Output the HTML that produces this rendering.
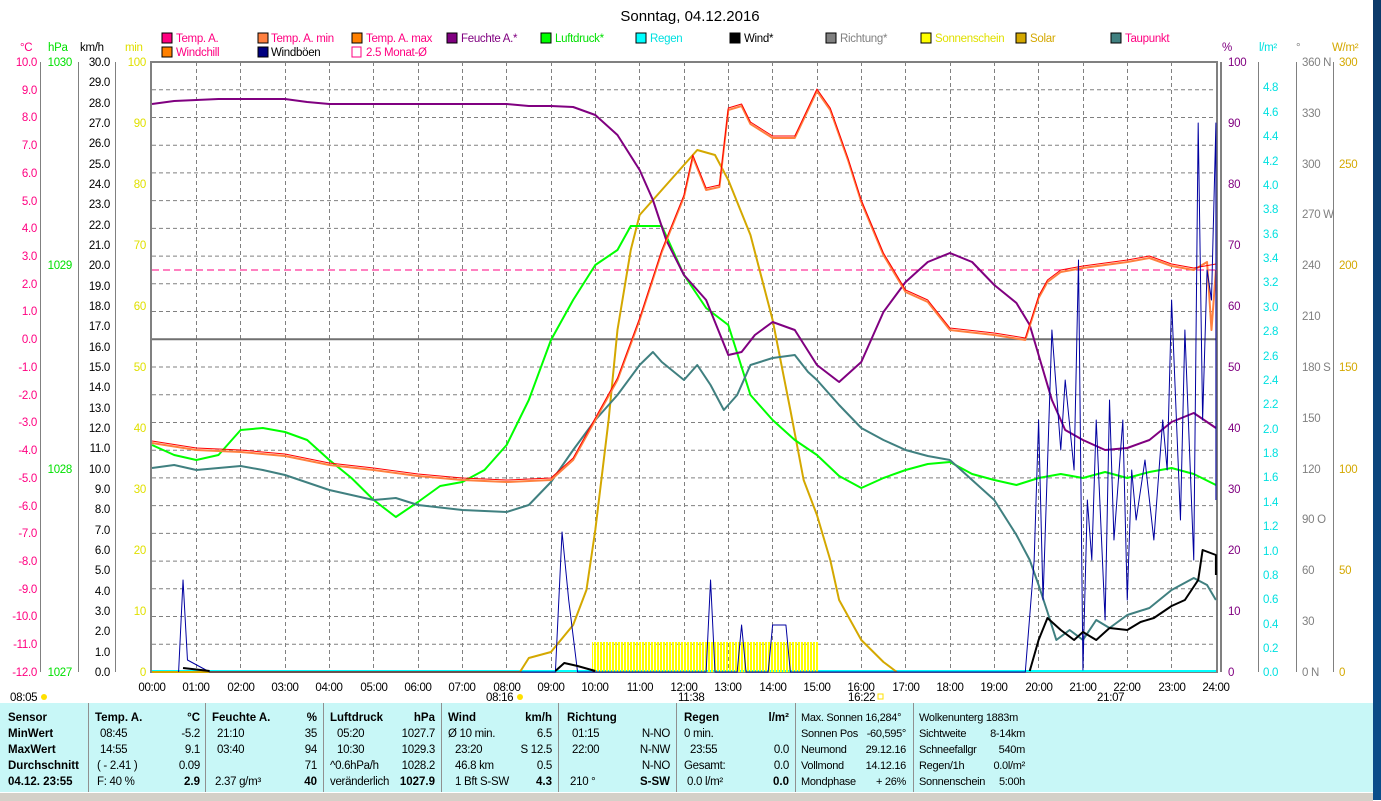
<!DOCTYPE html>
<html><head><meta charset="utf-8"><style>
body{margin:0;width:1381px;height:800px;overflow:hidden;background:#fff;font-family:"Liberation Sans",sans-serif;position:relative}
svg{position:absolute;left:0;top:0}
svg text{font-family:"Liberation Sans",sans-serif;font-size:11.5px;letter-spacing:-0.3px}
#tbl{position:absolute;left:0;top:703px;width:1373px;height:89px;background:#c8f7f7}
.c{position:absolute;top:0;height:89px;border-left:1px solid #909090}
.r{position:absolute;font-size:11.5px;letter-spacing:-0.3px;white-space:pre;line-height:14px}
.b{font-weight:bold;letter-spacing:0}
#strip{position:absolute;left:1373px;top:0;width:8px;height:800px;background:linear-gradient(#0c3a6a,#0a4d8a)}
#bot{position:absolute;left:0;top:792px;width:1373px;height:8px;background:#d4d0c8;border-top:1px solid #fff}
</style></head><body>
<svg width="1381" height="703" viewBox="0 0 1381 703">
<text x="690" y="21" text-anchor="middle" style="font-size:15px;letter-spacing:0">Sonntag, 04.12.2016</text>
<g stroke="#000" stroke-width="1">
<rect x="162" y="33" width="10" height="10" fill="#ff0080"/><rect x="258" y="33" width="10" height="10" fill="#ff8040"/><rect x="352" y="33" width="10" height="10" fill="#ff8000"/><rect x="447" y="33" width="10" height="10" fill="#800080"/><rect x="541" y="33" width="10" height="10" fill="#00ff00"/><rect x="636" y="33" width="10" height="10" fill="#00ffff"/><rect x="730" y="33" width="10" height="10" fill="#000"/><rect x="826" y="33" width="10" height="10" fill="#808080"/><rect x="921" y="33" width="10" height="10" fill="#ffff00"/><rect x="1016" y="33" width="10" height="10" fill="#d4a800"/><rect x="1111" y="33" width="10" height="10" fill="#408080"/>
<rect x="162" y="47" width="10" height="10" fill="#ff8000"/><rect x="258" y="47" width="10" height="10" fill="#000080"/>
</g>
<rect x="352" y="47" width="9" height="10" fill="none" stroke="#ff0080"/>
<g>
<text x="176" y="42" fill="#ff0080">Temp. A.</text><text x="271" y="42" fill="#ff0080">Temp. A. min</text><text x="366" y="42" fill="#ff0080">Temp. A. max</text><text x="461" y="42" fill="#800080">Feuchte A.*</text><text x="555" y="42" fill="#00e000">Luftdruck*</text><text x="650" y="42" fill="#00e0e0">Regen</text><text x="744" y="42" fill="#000">Wind*</text><text x="840" y="42" fill="#808080">Richtung*</text><text x="935" y="42" fill="#e0e000">Sonnenschein</text><text x="1030" y="42" fill="#d4a800">Solar</text><text x="1125" y="42" fill="#ff0080">Taupunkt</text>
<text x="176" y="56" fill="#ff0080">Windchill</text><text x="271" y="56" fill="#000">Windböen</text><text x="366" y="56" fill="#ff0080">2.5 Monat-Ø</text>
</g>
<text x="20" y="51" fill="#ff0080">°C</text><text x="48" y="51" fill="#00e000">hPa</text><text x="80" y="51" fill="#000">km/h</text><text x="125" y="51" fill="#e0e000">min</text>
<text x="1222" y="51" fill="#800080">%</text><text x="1259" y="51" fill="#00e0e0">l/m²</text><text x="1296" y="51" fill="#808080">°</text><text x="1332" y="51" fill="#d4a800">W/m²</text>
<g stroke="#808080" stroke-width="1">
<line x1="40.5" y1="62" x2="40.5" y2="672"/><line x1="78.5" y1="62" x2="78.5" y2="672"/><line x1="115.5" y1="62" x2="115.5" y2="672"/>
<line x1="1258.5" y1="62" x2="1258.5" y2="672"/><line x1="1296.5" y1="62" x2="1296.5" y2="672"/><line x1="1333.5" y1="62" x2="1333.5" y2="672"/>
</g>
<g stroke="#808080" stroke-dasharray="4,3" stroke-width="1">
<line x1="152" y1="89.7" x2="1216" y2="89.7"/><line x1="152" y1="117.5" x2="1216" y2="117.5"/><line x1="152" y1="145.2" x2="1216" y2="145.2"/><line x1="152" y1="172.9" x2="1216" y2="172.9"/><line x1="152" y1="200.6" x2="1216" y2="200.6"/><line x1="152" y1="228.4" x2="1216" y2="228.4"/><line x1="152" y1="256.1" x2="1216" y2="256.1"/><line x1="152" y1="283.8" x2="1216" y2="283.8"/><line x1="152" y1="311.5" x2="1216" y2="311.5"/><line x1="152" y1="367" x2="1216" y2="367"/><line x1="152" y1="394.7" x2="1216" y2="394.7"/><line x1="152" y1="422.5" x2="1216" y2="422.5"/><line x1="152" y1="450.2" x2="1216" y2="450.2"/><line x1="152" y1="477.9" x2="1216" y2="477.9"/><line x1="152" y1="505.6" x2="1216" y2="505.6"/><line x1="152" y1="533.4" x2="1216" y2="533.4"/><line x1="152" y1="561.1" x2="1216" y2="561.1"/><line x1="152" y1="588.8" x2="1216" y2="588.8"/><line x1="152" y1="616.5" x2="1216" y2="616.5"/><line x1="152" y1="644.3" x2="1216" y2="644.3"/>
<line x1="196.5" y1="62" x2="196.5" y2="672"/><line x1="240.5" y1="62" x2="240.5" y2="672"/><line x1="285.5" y1="62" x2="285.5" y2="672"/><line x1="329.5" y1="62" x2="329.5" y2="672"/><line x1="373.5" y1="62" x2="373.5" y2="672"/><line x1="418.5" y1="62" x2="418.5" y2="672"/><line x1="462.5" y1="62" x2="462.5" y2="672"/><line x1="506.5" y1="62" x2="506.5" y2="672"/><line x1="551.5" y1="62" x2="551.5" y2="672"/><line x1="595.5" y1="62" x2="595.5" y2="672"/><line x1="639.5" y1="62" x2="639.5" y2="672"/><line x1="684.5" y1="62" x2="684.5" y2="672"/><line x1="728.5" y1="62" x2="728.5" y2="672"/><line x1="772.5" y1="62" x2="772.5" y2="672"/><line x1="817.5" y1="62" x2="817.5" y2="672"/><line x1="861.5" y1="62" x2="861.5" y2="672"/><line x1="905.5" y1="62" x2="905.5" y2="672"/><line x1="950.5" y1="62" x2="950.5" y2="672"/><line x1="994.5" y1="62" x2="994.5" y2="672"/><line x1="1038.5" y1="62" x2="1038.5" y2="672"/><line x1="1083.5" y1="62" x2="1083.5" y2="672"/><line x1="1127.5" y1="62" x2="1127.5" y2="672"/><line x1="1171.5" y1="62" x2="1171.5" y2="672"/>
</g>
<rect x="151" y="62" width="1066" height="610" fill="none" stroke="#808080" stroke-width="2"/>
<line x1="1221" y1="62" x2="1221" y2="672" stroke="#808080" stroke-width="2"/>
<line x1="152" y1="339.3" x2="1216" y2="339.3" stroke="#707070" stroke-width="2"/>
<line x1="152" y1="270" x2="1216" y2="270" stroke="#ff0080" stroke-dasharray="7,4"/>
<line x1="152" y1="671" x2="1216" y2="671" stroke="#00ffff" stroke-width="2"/>
<defs><pattern id="ys" width="3" height="30" patternUnits="userSpaceOnUse"><rect width="2" height="30" fill="#ffff00"/></pattern></defs>
<rect x="592" y="642" width="226" height="30" fill="url(#ys)"/>
<g transform="translate(152,0) scale(44.33,1)" fill="none" stroke-linejoin="round">
<polyline vector-effect="non-scaling-stroke" stroke="#d4a800" stroke-width="2" points="0,672 8.3,672 8.5,658 9,652 9.5,625 9.8,590 10,530 10.3,420 10.5,330 10.8,250 11,215 11.5,190 12,165 12.3,150 12.7,155 13,180 13.5,235 14,320 14.4,410 14.7,480 15,515 15.3,560 15.5,600 16,640 16.5,662 16.8,672"/>
<polyline vector-effect="non-scaling-stroke" stroke="#00ff00" stroke-width="2" points="0,445 0.5,455 1,460 1.5,455 2,430 2.5,428 3,432 3.5,440 4,460 4.5,478 5,500 5.5,517 6,502 6.5,486 7,482 7.5,470 8,445 8.5,400 9,340 9.5,300 10,265 10.5,250 10.8,226 11.5,226 12,275 12.5,308 13,325 13.5,395 14,420 14.5,440 15,455 15.5,476 16,488 16.5,478 17,470 17.5,464 18,462 18.5,474 19,480 19.5,485 20,478 20.5,474 21,478 21.5,472 22,478 22.5,472 23,468 23.5,474 24,485"/>
<polyline vector-effect="non-scaling-stroke" stroke="#408080" stroke-width="2" points="0,468 0.5,465 1,470 2,466 2.5,470 3,475 4,490 5,500 5.5,498 6,505 7,510 8,512 8.5,505 9,482 9.5,450 10,420 10.5,395 11,365 11.3,352 11.5,362 12,380 12.3,365 12.6,385 12.9,410 13.2,395 13.5,365 14,358 14.5,355 14.8,372 15,380 15.5,405 16,428 16.5,440 17,450 17.5,456 18,460 18.5,480 19,500 19.5,535 19.8,560 20,585 20.2,612 20.4,640 20.7,630 21,640 21.3,620 21.6,628 22,615 22.5,608 23,590 23.5,578 23.8,585 24,600"/>
<polyline vector-effect="non-scaling-stroke" stroke="#800080" stroke-width="2" points="0,104 0.5,101 1,100 1.5,99 3,99 3.5,102 4,104 8,104 8.5,106 9,106 9.5,107 10,115 10.5,135 11,170 11.3,200 11.6,240 12,275 12.5,300 13,355 13.3,352 13.6,335 14,322 14.5,330 15,365 15.5,382 16,362 16.5,312 17,282 17.5,262 18,253 18.5,262 19,285 19.5,303 19.8,325 20,355 20.3,400 20.6,430 21,440 21.5,450 22,448 22.5,440 23,422 23.5,413 24,428"/>
<polyline vector-effect="non-scaling-stroke" stroke="#ff8040" stroke-width="2" points="0,443 1,450 2,452 3,456 4,465 5,470 6,476 7,480 8,482 9,480 9.5,460 10,420 10.5,380 11,320 11.5,252 12,197 12.2,157 12.5,190 12.8,187 13,110 13.3,106 13.5,124 14,138 14.5,138 15,91 15.3,110 15.7,160 16,202 16.5,255 17,292 17.5,302 18,330 19,335 19.7,340 20,298 20.2,282 20.5,272 21,268 22,262 22.5,258 23,266 23.5,270 23.8,262 23.9,330 24,270"/>
<polyline vector-effect="non-scaling-stroke" stroke="#ff0000" stroke-width="1" points="0,441 1,448 2,450 3,454 4,463 5,468 6,474 7,478 8,480 9,478 9.5,458 10,418 10.5,378 11,318 11.5,250 12,195 12.2,155 12.5,188 12.8,185 13,108 13.3,104 13.5,122 14,136 14.5,136 15,89 15.3,108 15.7,158 16,200 16.5,253 17,290 17.5,300 18,328 19,333 19.7,338 20,296 20.2,280 20.5,270 21,266 22,260 22.5,256 23,264 23.5,268 24,264"/>
<polyline vector-effect="non-scaling-stroke" stroke="#0000a0" stroke-width="1" points="0.6,672 0.7,580 0.8,660 1.3,672 9.1,672 9.25,532 9.4,600 9.6,672 12.5,672 12.6,580 12.7,672 13.2,672 13.3,625 13.4,672 13.9,672 14,625 14.3,625 14.4,672 19.7,672 19.9,560 20,420 20.1,600 20.3,330 20.5,450 20.6,380 20.8,470 20.9,260 21,670 21.1,500 21.2,560 21.3,420 21.5,620 21.6,400 21.7,540 21.9,420 22,600 22.1,470 22.2,520 22.4,460 22.6,540 22.8,420 22.9,470 23,300 23.2,520 23.3,330 23.5,560 23.6,123 23.7,420 23.8,270 23.9,300 24,123 24,500"/>
<polyline vector-effect="non-scaling-stroke" stroke="#000" stroke-width="2" points="0.7,668 1.3,671"/>
<polyline vector-effect="non-scaling-stroke" stroke="#000" stroke-width="2" points="9.1,671 9.3,663 9.6,666 10,671"/>
<polyline vector-effect="non-scaling-stroke" stroke="#000" stroke-width="2" points="19.8,671 20,640 20.2,618 20.5,630 20.8,640 21,632 21.3,640 21.6,628 22,630 22.3,622 22.6,618 23,606 23.3,600 23.6,580 23.7,550 24,555 24,575"/>
</g>
<g fill="#ff0080" text-anchor="end">
<text x="37" y="66">10.0</text><text x="37" y="94">9.0</text><text x="37" y="121">8.0</text><text x="37" y="149">7.0</text><text x="37" y="177">6.0</text><text x="37" y="205">5.0</text><text x="37" y="232">4.0</text><text x="37" y="260">3.0</text><text x="37" y="288">2.0</text><text x="37" y="315">1.0</text><text x="37" y="343">0.0</text><text x="37" y="371">-1.0</text><text x="37" y="399">-2.0</text><text x="37" y="426">-3.0</text><text x="37" y="454">-4.0</text><text x="37" y="482">-5.0</text><text x="37" y="510">-6.0</text><text x="37" y="537">-7.0</text><text x="37" y="565">-8.0</text><text x="37" y="593">-9.0</text><text x="37" y="620">-10.0</text><text x="37" y="648">-11.0</text><text x="37" y="676">-12.0</text>
</g>
<g fill="#00e000" text-anchor="end"><text x="72" y="66">1030</text><text x="72" y="269">1029</text><text x="72" y="473">1028</text><text x="72" y="676">1027</text></g>
<g fill="#000" text-anchor="end">
<text x="110" y="66">30.0</text><text x="110" y="86">29.0</text><text x="110" y="107">28.0</text><text x="110" y="127">27.0</text><text x="110" y="147">26.0</text><text x="110" y="168">25.0</text><text x="110" y="188">24.0</text><text x="110" y="208">23.0</text><text x="110" y="229">22.0</text><text x="110" y="249">21.0</text><text x="110" y="269">20.0</text><text x="110" y="290">19.0</text><text x="110" y="310">18.0</text><text x="110" y="330">17.0</text><text x="110" y="351">16.0</text><text x="110" y="371">15.0</text><text x="110" y="391">14.0</text><text x="110" y="412">13.0</text><text x="110" y="432">12.0</text><text x="110" y="452">11.0</text><text x="110" y="473">10.0</text><text x="110" y="493">9.0</text><text x="110" y="513">8.0</text><text x="110" y="534">7.0</text><text x="110" y="554">6.0</text><text x="110" y="574">5.0</text><text x="110" y="595">4.0</text><text x="110" y="615">3.0</text><text x="110" y="635">2.0</text><text x="110" y="656">1.0</text><text x="110" y="676">0.0</text>
</g>
<g fill="#e0e000" text-anchor="end"><text x="146" y="66">100</text><text x="146" y="127">90</text><text x="146" y="188">80</text><text x="146" y="249">70</text><text x="146" y="310">60</text><text x="146" y="371">50</text><text x="146" y="432">40</text><text x="146" y="493">30</text><text x="146" y="554">20</text><text x="146" y="615">10</text><text x="146" y="676">0</text></g>
<g fill="#800080"><text x="1228" y="66">100</text><text x="1228" y="127">90</text><text x="1228" y="188">80</text><text x="1228" y="249">70</text><text x="1228" y="310">60</text><text x="1228" y="371">50</text><text x="1228" y="432">40</text><text x="1228" y="493">30</text><text x="1228" y="554">20</text><text x="1228" y="615">10</text><text x="1228" y="676">0</text></g>
<g fill="#00e0e0"><text x="1263" y="91">4.8</text><text x="1263" y="116">4.6</text><text x="1263" y="140">4.4</text><text x="1263" y="165">4.2</text><text x="1263" y="189">4.0</text><text x="1263" y="213">3.8</text><text x="1263" y="238">3.6</text><text x="1263" y="262">3.4</text><text x="1263" y="286">3.2</text><text x="1263" y="311">3.0</text><text x="1263" y="335">2.8</text><text x="1263" y="360">2.6</text><text x="1263" y="384">2.4</text><text x="1263" y="408">2.2</text><text x="1263" y="433">2.0</text><text x="1263" y="457">1.8</text><text x="1263" y="481">1.6</text><text x="1263" y="506">1.4</text><text x="1263" y="530">1.2</text><text x="1263" y="555">1.0</text><text x="1263" y="579">0.8</text><text x="1263" y="603">0.6</text><text x="1263" y="628">0.4</text><text x="1263" y="652">0.2</text><text x="1263" y="676">0.0</text></g>
<g fill="#808080"><text x="1302" y="66">360 N</text><text x="1302" y="117">330</text><text x="1302" y="168">300</text><text x="1302" y="218">270 W</text><text x="1302" y="269">240</text><text x="1302" y="320">210</text><text x="1302" y="371">180 S</text><text x="1302" y="422">150</text><text x="1302" y="473">120</text><text x="1302" y="523">90  O</text><text x="1302" y="574">60</text><text x="1302" y="625">30</text><text x="1302" y="676">0   N</text></g>
<g fill="#d4a800"><text x="1339" y="66">300</text><text x="1339" y="168">250</text><text x="1339" y="269">200</text><text x="1339" y="371">150</text><text x="1339" y="473">100</text><text x="1339" y="574">50</text><text x="1339" y="676">0</text></g>
<g fill="#000" text-anchor="middle">
<text x="152" y="691">00:00</text><text x="196" y="691">01:00</text><text x="241" y="691">02:00</text><text x="285" y="691">03:00</text><text x="329" y="691">04:00</text><text x="374" y="691">05:00</text><text x="418" y="691">06:00</text><text x="462" y="691">07:00</text><text x="507" y="691">08:00</text><text x="551" y="691">09:00</text><text x="595" y="691">10:00</text><text x="640" y="691">11:00</text><text x="684" y="691">12:00</text><text x="728" y="691">13:00</text><text x="773" y="691">14:00</text><text x="817" y="691">15:00</text><text x="861" y="691">16:00</text><text x="906" y="691">17:00</text><text x="950" y="691">18:00</text><text x="994" y="691">19:00</text><text x="1039" y="691">20:00</text><text x="1083" y="691">21:00</text><text x="1127" y="691">22:00</text><text x="1172" y="691">23:00</text><text x="1216" y="691">24:00</text>
</g>
<g fill="#000"><text x="10" y="701">08:05</text><text x="486" y="701">08:16</text><text x="678" y="701">11:38</text><text x="848" y="701">16:22</text><text x="1097" y="701">21:07</text></g>
<circle cx="44" cy="697" r="3" fill="#ffe000"/><circle cx="520" cy="697" r="3" fill="#ffe000"/><rect x="878" y="694" width="5" height="5" fill="none" stroke="#ffe000"/>
</svg>
<div id="tbl">
<div class="c" style="left:88px"></div><div class="c" style="left:205px"></div><div class="c" style="left:323px"></div><div class="c" style="left:441px"></div><div class="c" style="left:558px"></div><div class="c" style="left:676px"></div><div class="c" style="left:795px"></div><div class="c" style="left:913px"></div>
<div class="r b" style="left:8px;top:8px">Sensor</div><div class="r b" style="left:8px;top:24px">MinWert</div><div class="r b" style="left:8px;top:40px">MaxWert</div><div class="r b" style="left:8px;top:56px">Durchschnitt</div><div class="r b" style="left:8px;top:72px">04.12. 23:55</div>

<div class="r b" style="left:95px;top:8px">Temp. A.</div><div class="r b" style="right:1173px;top:8px">°C</div>
<div class="r" style="left:100px;top:24px">08:45</div><div class="r" style="right:1173px;top:24px">-5.2</div>
<div class="r" style="left:100px;top:40px">14:55</div><div class="r" style="right:1173px;top:40px">9.1</div>
<div class="r" style="left:97px;top:56px">( - 2.41 )</div><div class="r" style="right:1173px;top:56px">0.09</div>
<div class="r" style="left:97px;top:72px">F: 40 %</div><div class="r b" style="right:1173px;top:72px">2.9</div>

<div class="r b" style="left:212px;top:8px">Feuchte A.</div><div class="r b" style="right:1056px;top:8px">%</div>
<div class="r" style="left:217px;top:24px">21:10</div><div class="r" style="right:1056px;top:24px">35</div>
<div class="r" style="left:217px;top:40px">03:40</div><div class="r" style="right:1056px;top:40px">94</div>
<div class="r" style="right:1056px;top:56px">71</div>
<div class="r" style="left:215px;top:72px">2.37 g/m³</div><div class="r b" style="right:1056px;top:72px">40</div>

<div class="r b" style="left:330px;top:8px">Luftdruck</div><div class="r b" style="right:938px;top:8px">hPa</div>
<div class="r" style="left:337px;top:24px">05:20</div><div class="r" style="right:938px;top:24px">1027.7</div>
<div class="r" style="left:337px;top:40px">10:30</div><div class="r" style="right:938px;top:40px">1029.3</div>
<div class="r" style="left:330px;top:56px">^0.6hPa/h</div><div class="r" style="right:938px;top:56px">1028.2</div>
<div class="r" style="left:330px;top:72px">veränderlich</div><div class="r b" style="right:938px;top:72px">1027.9</div>

<div class="r b" style="left:448px;top:8px">Wind</div><div class="r b" style="right:821px;top:8px">km/h</div>
<div class="r" style="left:448px;top:24px">Ø 10 min.</div><div class="r" style="right:821px;top:24px">6.5</div>
<div class="r" style="left:455px;top:40px">23:20</div><div class="r" style="right:821px;top:40px">S 12.5</div>
<div class="r" style="left:455px;top:56px">46.8 km</div><div class="r" style="right:821px;top:56px">0.5</div>
<div class="r" style="left:455px;top:72px">1 Bft S-SW</div><div class="r b" style="right:821px;top:72px">4.3</div>

<div class="r b" style="left:567px;top:8px">Richtung</div>
<div class="r" style="left:572px;top:24px">01:15</div><div class="r" style="right:703px;top:24px">N-NO</div>
<div class="r" style="left:572px;top:40px">22:00</div><div class="r" style="right:703px;top:40px">N-NW</div>
<div class="r" style="right:703px;top:56px">N-NO</div>
<div class="r" style="left:570px;top:72px">210 °</div><div class="r b" style="right:703px;top:72px">S-SW</div>

<div class="r b" style="left:684px;top:8px">Regen</div><div class="r b" style="right:584px;top:8px">l/m²</div>
<div class="r" style="left:684px;top:24px">0 min.</div>
<div class="r" style="left:690px;top:40px">23:55</div><div class="r" style="right:584px;top:40px">0.0</div>
<div class="r" style="left:684px;top:56px">Gesamt:</div><div class="r" style="right:584px;top:56px">0.0</div>
<div class="r" style="left:687px;top:72px">0.0 l/m²</div><div class="r b" style="right:584px;top:72px">0.0</div>

<div class="r" style="left:801px;top:8px;font-size:11px">Max. Sonnen 16,284°</div>
<div class="r" style="left:801px;top:24px;font-size:11px">Sonnen Pos</div><div class="r" style="right:467px;top:24px;font-size:11px">-60,595°</div>
<div class="r" style="left:801px;top:40px;font-size:11px">Neumond</div><div class="r" style="right:467px;top:40px;font-size:11px">29.12.16</div>
<div class="r" style="left:801px;top:56px;font-size:11px">Vollmond</div><div class="r" style="right:467px;top:56px;font-size:11px">14.12.16</div>
<div class="r" style="left:801px;top:72px;font-size:11px">Mondphase</div><div class="r" style="right:467px;top:72px;font-size:11px">+ 26%</div>

<div class="r" style="left:919px;top:8px;font-size:11px">Wolkenunterg 1883m</div>
<div class="r" style="left:919px;top:24px;font-size:11px">Sichtweite</div><div class="r" style="right:348px;top:24px;font-size:11px">8-14km</div>
<div class="r" style="left:919px;top:40px;font-size:11px">Schneefallgr</div><div class="r" style="right:348px;top:40px;font-size:11px">540m</div>
<div class="r" style="left:919px;top:56px;font-size:11px">Regen/1h</div><div class="r" style="right:348px;top:56px;font-size:11px">0.0l/m²</div>
<div class="r" style="left:919px;top:72px;font-size:11px">Sonnenschein</div><div class="r" style="right:348px;top:72px;font-size:11px">5:00h</div>
</div>
<div id="bot"></div>
<div id="strip"></div>
</body></html>
